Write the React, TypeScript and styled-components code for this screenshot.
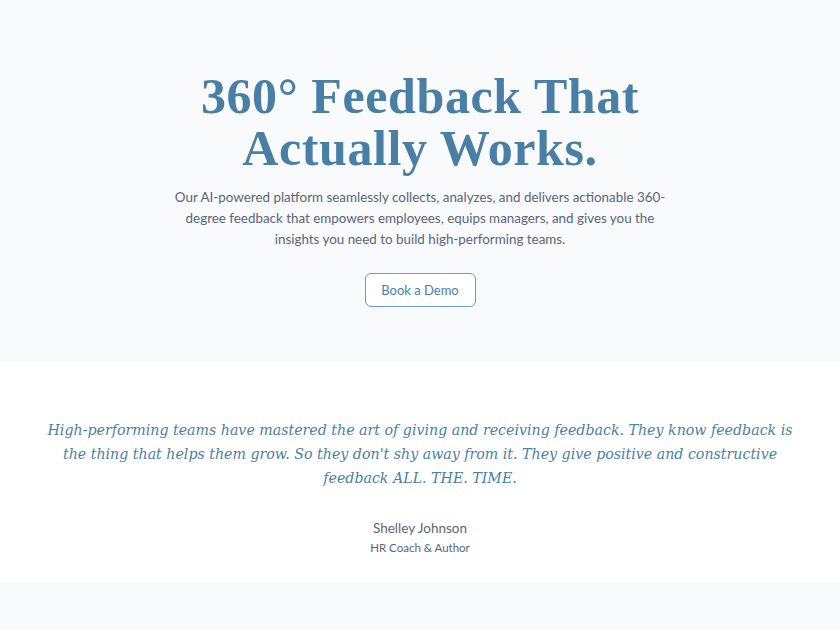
import React from "react";
import styled, { createGlobalStyle } from "styled-components";

const Global = createGlobalStyle`
  html, body { margin: 0; padding: 0; background: #f8fafc; }
  * { box-sizing: border-box; }
`;

const Page = styled.div`
  width: 100%;
  min-height: 630px;
  background: #f8fafc;
`;

const Hero = styled.section`
  height: 362px;
  padding-top: 70px;
  display: flex;
  flex-direction: column;
  align-items: center;
  background: #f8fafc;
`;

const Title = styled.h1`
  margin: 0;
  font-family: "Liberation Serif", "DejaVu Serif", serif;
  font-weight: 700;
  font-size: 50px;
  line-height: 52px;
  color: #4a7fa5;
  text-align: center;
  letter-spacing: 0.6px;
`;

const Lead = styled.p`
  margin: 13px 0 0;
  max-width: 520px;
  font-family: "Lato", "Open Sans", sans-serif;
  font-size: 13.4px;
  line-height: 21px;
  color: #5b6579;
  text-align: center;
`;

const Button = styled.button`
  margin-top: 23px;
  width: 111px;
  height: 34px;
  border: 1px solid #6d9dc0;
  border-radius: 6px;
  background: #ffffff;
  font-family: "Lato", "Open Sans", sans-serif;
  font-size: 13px;
  color: #4a7fa5;
  cursor: pointer;
`;

const QuoteSection = styled.section`
  height: 220px;
  background: #ffffff;
  display: flex;
  flex-direction: column;
  align-items: center;
  padding-top: 56px;
`;

const Quote = styled.blockquote`
  margin: 0;
  max-width: 790px;
  font-family: "DejaVu Serif", "Liberation Serif", serif;
  font-style: italic;
  font-size: 14.2px;
  line-height: 24px;
  color: #4a7fa5;
  text-align: center;
`;

const Author = styled.div`
  margin-top: 28px;
  font-family: "Lato", "Open Sans", sans-serif;
  font-size: 13.5px;
  line-height: 20px;
  color: #5b6579;
  text-align: center;
`;

const Role = styled.div`
  margin-top: 2px;
  font-family: "Lato", "Open Sans", sans-serif;
  font-size: 11.5px;
  line-height: 16px;
  color: #5b6579;
  text-align: center;
`;

export default function App() {
  return (
    <Page>
      <Global />
      <Hero>
        <Title>
          360° Feedback That
          <br />
          Actually Works.
        </Title>
        <Lead>
          Our AI-powered platform seamlessly collects, analyzes, and delivers actionable 360-
          <br />
          degree feedback that empowers employees, equips managers, and gives you the
          <br />
          insights you need to build high-performing teams.
        </Lead>
        <Button>Book a Demo</Button>
      </Hero>
      <QuoteSection>
        <Quote>
          High-performing teams have mastered the art of giving and receiving feedback. They know
          feedback is
          <br />
          the thing that helps them grow. So they don't shy away from it. They give positive and
          constructive
          <br />
          feedback ALL. THE. TIME.
        </Quote>
        <Author>Shelley Johnson</Author>
        <Role>HR Coach &amp; Author</Role>
      </QuoteSection>
    </Page>
  );
}
